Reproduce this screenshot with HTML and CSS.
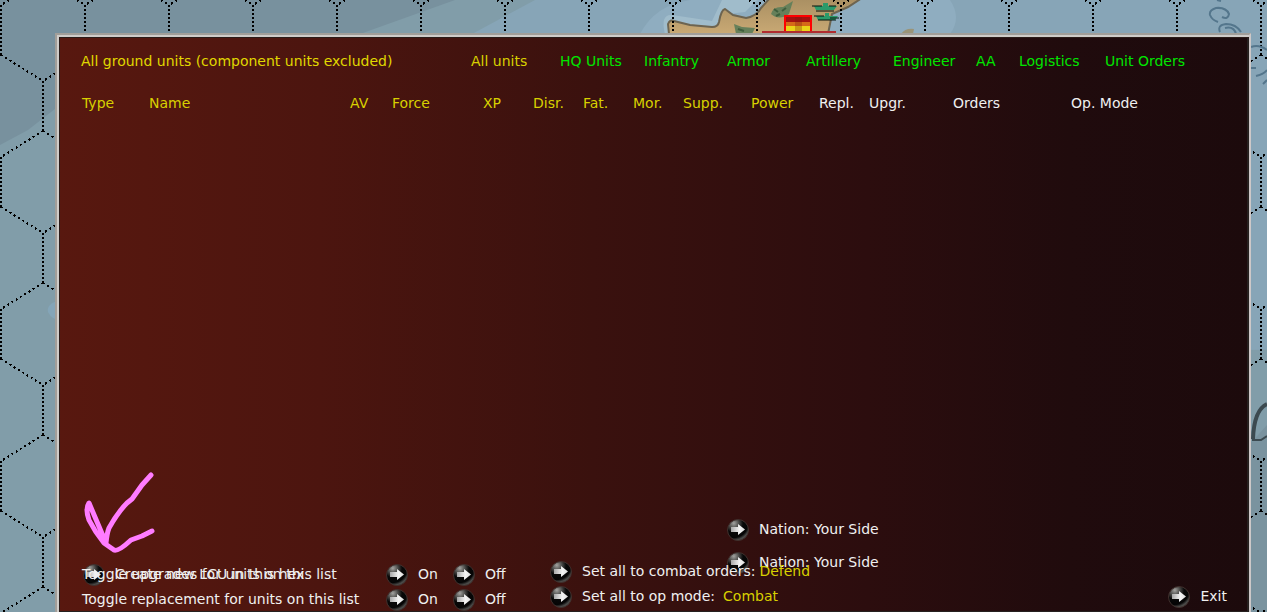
FILE: index.html
```
<!DOCTYPE html>
<html lang="en">
<head>
    <meta charset="UTF-8">
    <meta name="viewport" content="width=device-width, initial-scale=1.0">
    <title>Ground Units</title>
    <link rel="stylesheet" href="styles.css">
</head>
<body>
    <svg class="map" aria-hidden="true">
        <defs>
            <pattern id="hexGrid" x="1" y="5" width="84" height="152" patternUnits="userSpaceOnUse">
                <g fill="none" stroke="#000" stroke-width="2" shape-rendering="crispEdges">
                    <path d="M0 0V50M84 0V50M42 76V126" stroke-dasharray="2 2"/>
                    <path d="M0 50L42 76M84 50L42 76M42 126L0 152M42 126L84 152" stroke-dasharray="2 3"/>
                </g>
            </pattern>
            <linearGradient id="land" x1="0" y1="0" x2="0" y2="1">
                <stop offset="0" stop-color="#a98f62"/>
                <stop offset="1" stop-color="#c9a974"/>
            </linearGradient>
        </defs>
        <rect width="100%" height="100%" fill="#819da9"/>
        <path d="M0 0H455L360 34L60 105L28 130L0 145Z" fill="#78919e"/>
        <path d="M535 0H2000V34H472Z" fill="#87a5b7"/>
        <path d="M690 0H950Q962 18 950 34H640Q655 5 690 0Z" fill="#8fadc0"/>
        <path d="M665 34Q660 14 672 15L712 21L722 0H757L745 12L727 14L718 30Z" fill="#a0bccb"/>
        <path d="M1240 34H2000V340L1240 350Z" fill="#87a5b7"/>
        <path d="M1240 455L1267 425V612H1240Z" fill="#7a939f"/>
        <path d="M60 300Q46 304 48 312Q52 320 60 320Z" fill="#84a5b8"/>
        <!-- coastline -->
        <path d="M669 34L668 24Q670 19 674 21L690 25L712 27Q718 27 719 22Q721 10 725 9L733 15L746 18Q757 16 761 8L770 -2H862L848 7L832 14L828 34Z" fill="url(#land)" stroke="#6d6450" stroke-width="2"/>
        <path d="M901 34Q905 28 914 29L913 34Z" fill="#9a9478"/>
        <path d="M771 14Q773 6 783 7L793 1L789 14Q779 21 771 14ZM734 24L742 27L755 28L752 34H736Z" fill="#66805a"/>
        <path d="M774 9L778 12M782 11L786 8M776 16L780 14M738 29L744 31" stroke="#3f5e3d" stroke-width="2"/>
        <rect width="100%" height="100%" fill="url(#hexGrid)"/>
        <rect x="785" y="16" width="26" height="20" fill="#a41210"/>
        <path d="M786 22H810V26H786Z" fill="#d56a18"/>
        <path d="M786 26H810V31H786Z" fill="#ead418"/>
        <path d="M795 17H802V31H795Z" fill="#7a1c12" fill-opacity="0.300"/>
        <path d="M785 36V16H811V36" fill="none" stroke="#f00" stroke-width="2"/>
        <path d="M814 6H823V3H828V6H837L834 10H816ZM816 16H825V13H829V16H838L835 20H818Z" fill="#2b9a6a"/>
        <path d="M812 6H822M829 6H836M816 11H834M814 16H824M830 18H839M818 20H836" stroke="#06150f" stroke-width="1"/>
        <path d="M762 32H836" stroke="#b02c30" stroke-width="2"/>
        <g class="sea-name">
            <path d="M1222 17Q1228 20 1229 14Q1226 7 1216 8Q1209 10 1210 15Q1212 20 1218 22M1220 32Q1217 25 1226 24Q1236 24 1241 32M1225 28Q1234 26 1236 34M1217 0L1221 1"/>
            <path d="M1251 47Q1259 44 1267 50M1251 68L1256 68M1256 76Q1264 74 1267 70M1263 84L1267 80"/>
        </g>
        <path d="M1267 404Q1254 410 1253 439" fill="none" stroke="#3c4a50" stroke-width="4"/>
        <path d="M1252 440H1261L1267 436" fill="none" stroke="#3c4a50" stroke-width="2"/>
    </svg>

    <svg class="sprites" aria-hidden="true">
        <defs>
            <radialGradient id="ball" cx="30%" cy="18%" r="80%">
                <stop offset="0" stop-color="#a3a3a0"/>
                <stop offset="0.300" stop-color="#4c4c4a"/>
                <stop offset="0.550" stop-color="#080808"/>
                <stop offset="0.850" stop-color="#050505"/>
                <stop offset="1" stop-color="#4a4a48"/>
            </radialGradient>
            <linearGradient id="arrow" x1="0" x2="1" y1="0" y2="0">
                <stop offset="0" stop-color="#a8a8a8"/>
                <stop offset="0.600" stop-color="#f4f4f4"/>
                <stop offset="1" stop-color="#ddd"/>
            </linearGradient>
        </defs>
        <symbol id="go" viewBox="0 0 22 22">
            <circle cx="11" cy="11" r="10.500" fill="url(#ball)" stroke="#40302d"/>
            <path d="M4 8H11V5L18 10.500L11 16V13H4Z" fill="url(#arrow)"/>
        </symbol>
    </svg>

    <main class="panel">
        <header class="filters">
            <h1 class="title">All ground units (component units excluded)</h1>
            <button class="filter active">All units</button>
            <button class="filter">HQ Units</button>
            <button class="filter">Infantry</button>
            <button class="filter">Armor</button>
            <button class="filter">Artillery</button>
            <button class="filter">Engineer</button>
            <button class="filter">AA</button>
            <button class="filter">Logistics</button>
            <button class="filter">Unit Orders</button>
        </header>

        <table class="units">
            <thead>
                <tr>
                    <th class="col-type"><button class="sort">Type</button></th>
                    <th class="col-name"><button class="sort">Name</button></th>
                    <th class="col-av"><button class="sort">AV</button></th>
                    <th class="col-force"><button class="sort">Force</button></th>
                    <th class="col-stat"><button class="sort">XP</button></th>
                    <th class="col-stat"><button class="sort">Disr.</button></th>
                    <th class="col-stat"><button class="sort">Fat.</button></th>
                    <th class="col-stat"><button class="sort">Mor.</button></th>
                    <th class="col-wide"><button class="sort">Supp.</button></th>
                    <th class="col-wide"><button class="sort">Power</button></th>
                    <th class="col-stat">Repl.</th>
                    <th class="col-upgr">Upgr.</th>
                    <th class="col-orders">Orders</th>
                    <th>Op. Mode</th>
                </tr>
            </thead>
            <tbody></tbody>
        </table>

        <footer class="controls">
            <div class="toggles">
                <button class="command create"><svg class="icon"><use href="#go"/></svg>Create new LCU in this hex</button>
                <span class="label">Toggle upgrades for units on this list</span>
                <button class="command"><svg class="icon"><use href="#go"/></svg>On</button>
                <button class="command"><svg class="icon"><use href="#go"/></svg>Off</button>
                <span class="label">Toggle replacement for units on this list</span>
                <button class="command"><svg class="icon"><use href="#go"/></svg>On</button>
                <button class="command"><svg class="icon"><use href="#go"/></svg>Off</button>
            </div>
            <div class="set-all">
                <div class="nations">
                    <button class="command"><svg class="icon"><use href="#go"/></svg>Nation: Your Side</button>
                    <button class="command"><svg class="icon"><use href="#go"/></svg>Nation: Your Side</button>
                </div>
                <button class="command"><svg class="icon"><use href="#go"/></svg>Set all to combat orders: <span class="value">Defend</span></button>
                <button class="command"><svg class="icon"><use href="#go"/></svg>Set all to op mode: <span class="value mode">Combat</span></button>
            </div>
            <button class="command exit"><svg class="icon"><use href="#go"/></svg>Exit</button>

            <svg class="scribble" viewBox="0 0 72 84" aria-hidden="true">
                <path d="M68 5L59 15L49 29L44 33Q35 42 26 58Q24 63 23 73L6 33Q2 39 6 50Q12 62 21 73L31 80Q35 82 48 70L59 66L69 61"/>
            </svg>
        </footer>
    </main>
</body>
</html>
```
FILE: styles.css
```
* {
    box-sizing: border-box;
}

body {
    margin: 0;
    min-height: 100vh;
    display: flex;
    background: #819da9;
    color: #f0f0f0;
    font: 14px/24px "DejaVu Sans", Verdana, sans-serif;
    overflow: hidden;
}

button {
    padding: 0;
    border: none;
    background: none;
    color: inherit;
    font: inherit;
    text-align: left;
    white-space: nowrap;
    cursor: pointer;
}

/* map behind the panel */
.map {
    position: absolute;
    top: 0;
    left: 0;
    width: 100%;
    height: 100%;
}

.sea-name {
    fill: none;
    stroke: #54768c;
    stroke-width: 2;
}

.sprites {
    position: absolute;
    width: 0;
    height: 0;
}

.panel {
    position: relative;
    flex: 1;
    display: flex;
    flex-direction: column;
    margin: 33px 16px 0 55px;
    padding: 14px 22px 0 24px;
    border: 2px solid #a19e99;
    border-right-color: #cdc8c8;
    border-bottom: none;
    background: linear-gradient(to right, #58180f, #4c150f 22%, #3a110e 45%, #2c0d0e 68%, #200b0d 85%, #1c0a0c);
    box-shadow: inset 2px 2px #cfccc9, inset 3px 3px #2b1c19, inset -2px -1px #26201f;
}

.filters {
    display: grid;
    grid-template-columns: 390fr 89fr 84fr 83fr 79fr 87fr 83fr 43fr 86fr 122fr;
}

.title {
    margin: 0;
    font-size: 14px;
    font-weight: normal;
    color: #e0d800;
    white-space: nowrap;
}

.filter {
    color: #00e600;
}

.filter.active,
.sort,
.value {
    color: #d8d000;
}

.units {
    width: 100%;
    margin-top: 18px;
    border-collapse: collapse;
    table-layout: fixed;
}

.units th {
    padding: 0 0 0 1px;
    font-weight: normal;
    text-align: left;
    white-space: nowrap;
}

.col-type { width: 67px; }
.col-name { width: 201px; }
.col-av { width: 42px; }
.col-force { width: 91px; }
.col-stat { width: 50px; }
.col-wide { width: 68px; }
.col-upgr { width: 84px; }
.col-orders { width: 118px; }

/* bottom commands */
.controls {
    position: relative;
    display: flex;
    align-items: flex-start;
    margin-top: auto;
}

.toggles {
    position: relative;
    display: grid;
    grid-template-columns: 305px 67px 97px;
    grid-auto-rows: 25px;
    padding-top: 3px;
}

.label {
    position: relative;
    padding-left: 1px;
}

.command {
    display: flex;
    align-items: flex-start;
    height: 25px;
}

.icon {
    flex: none;
    width: 22px;
    height: 22px;
    margin: 2px 10px 0 0;
}

.create {
    position: absolute;
    top: 3px;
    left: 2px;
}

.set-all {
    position: relative;
}

.set-all > .command {
    position: relative;
}

.value {
    margin-left: 4px;
}

.mode {
    margin-left: 8px;
}

.nations {
    position: absolute;
    top: -42px;
    left: 177px;
    display: grid;
    gap: 8px;
}

.exit {
    margin: 25px 0 0 auto;
}

.scribble {
    position: absolute;
    left: 2px;
    bottom: 58px;
    width: 72px;
    height: 84px;
    fill: none;
    stroke: #ff7cff;
    stroke-width: 5;
    stroke-linecap: round;
    stroke-linejoin: round;
}
```
